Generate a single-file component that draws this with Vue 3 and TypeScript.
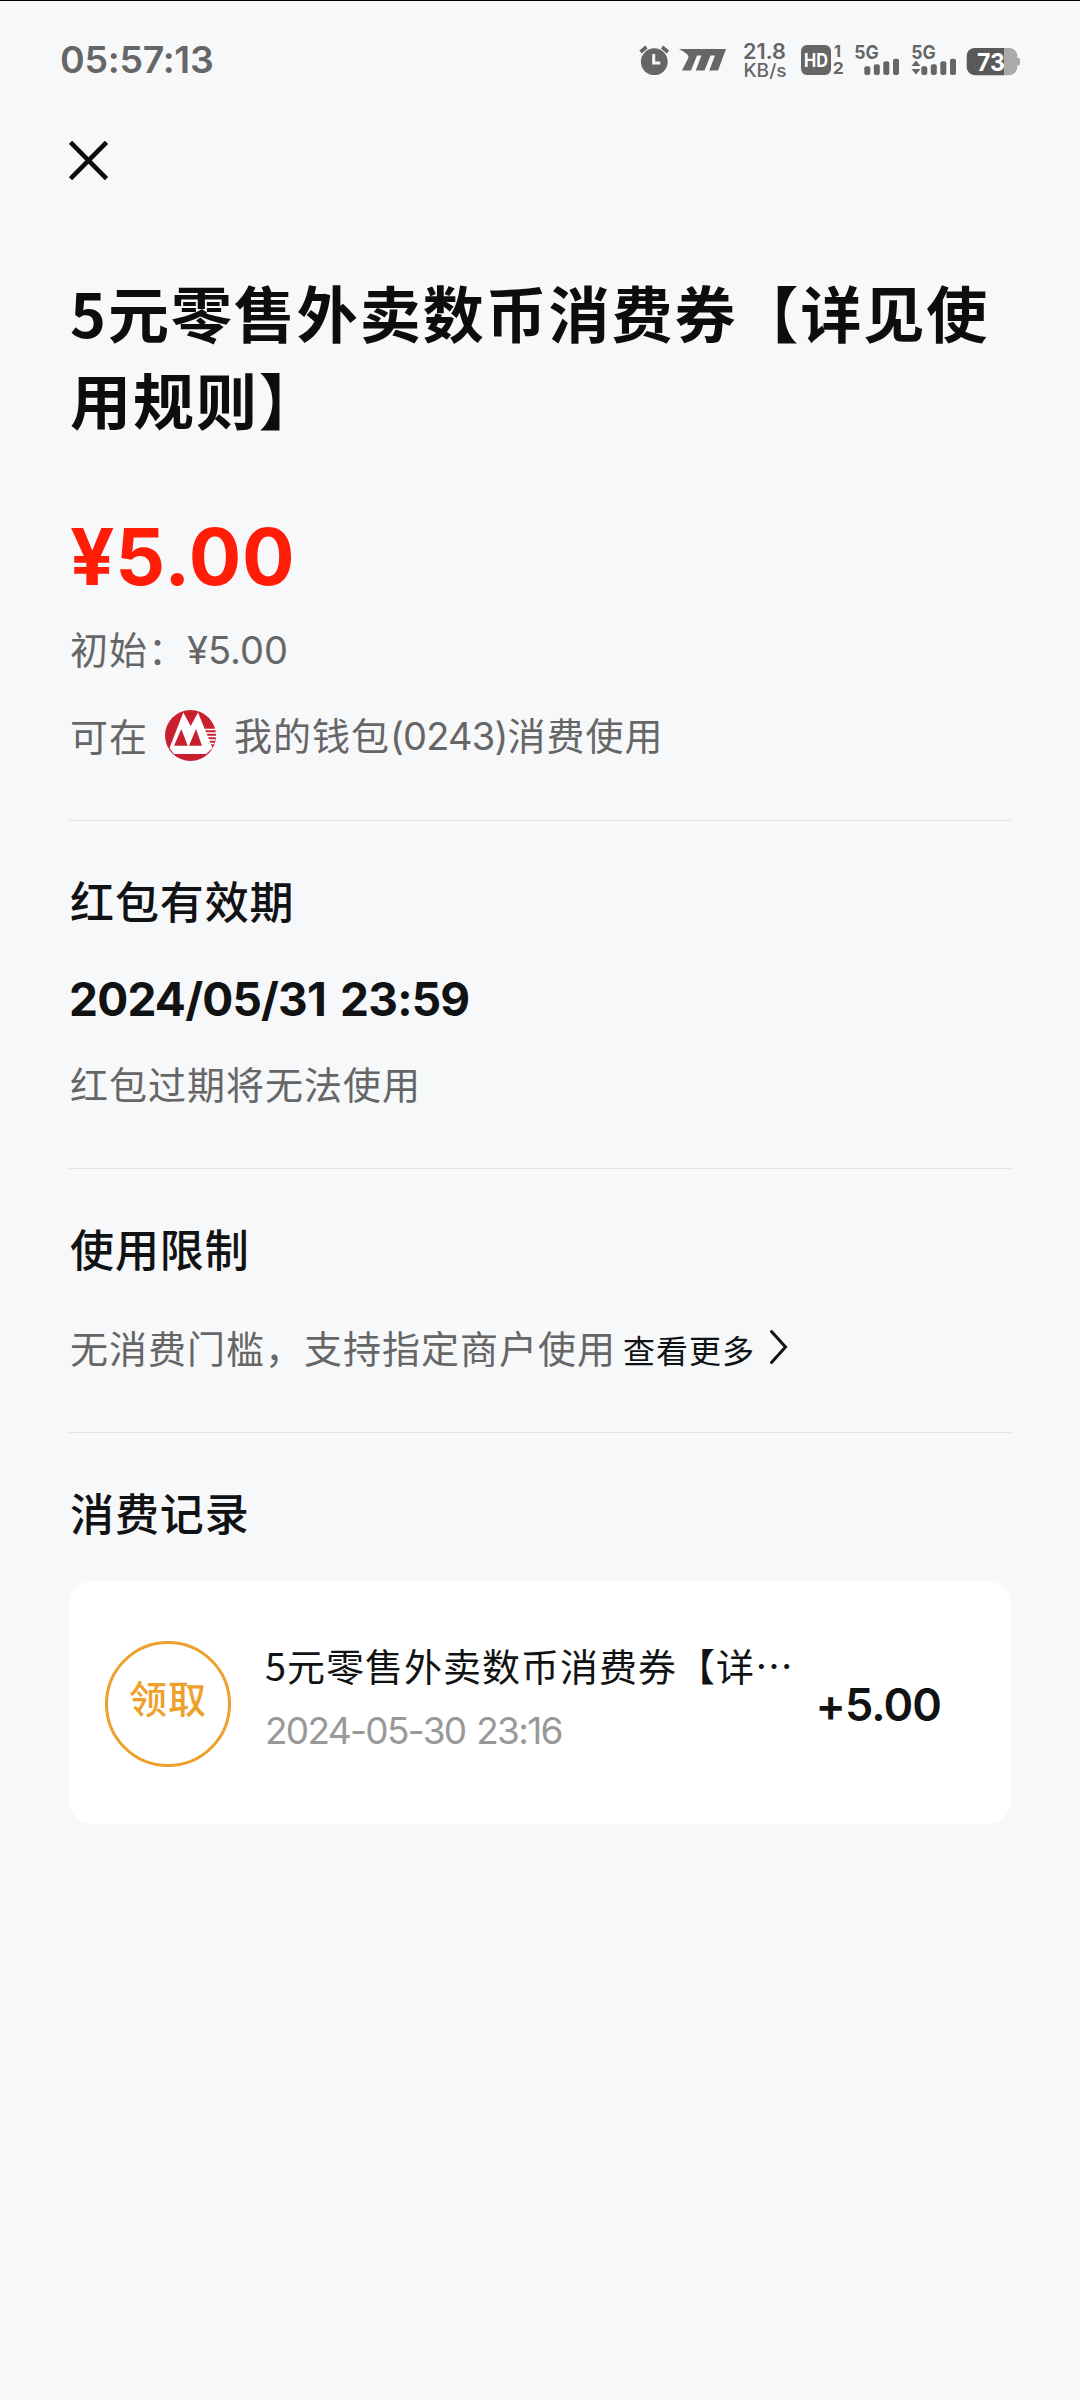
<script setup lang="ts">
interface SpendRecord {
  tag: string
  title: string
  time: string
  amount: string
}

const records: SpendRecord[] = [
  { tag: '领取', title: '5元零售外卖数币消费券【详…', time: '2024-05-30 23:16', amount: '+5.00' },
]

const signalBars = [
  { x: 864.3, y: 66.3 },
  { x: 873.8, y: 64.3 },
  { x: 883.3, y: 61.3 },
  { x: 893, y: 58.7 },
]
</script>

<template>
  <div class="screen" lang="zh-CN">
    <header class="status">
      <span class="clock">05:57:13</span>
      <div class="icons">
        <svg class="alarm" viewBox="638 40 32 40" width="32" height="40">
          <circle cx="654.3" cy="61.7" r="13.4" fill="#666" />
          <path d="M640.500 52l6-5M668 52l-6-5" stroke="#666" stroke-width="3.6" fill="none" />
          <path d="M653.700 54v9h6.600" stroke="#f7f8fa" stroke-width="3" fill="none" />
        </svg>
        <svg class="brand" viewBox="678 40 50 40" width="50" height="40">
          <path d="M679 49H726L718 70.500H709.300L715 55.500H710.500L704.500 70.500H695.700L701.500 55.500H697L691 70.500H682L688.500 57.500Q689 54 679 49Z" fill="#666" />
        </svg>
        <svg class="speed" viewBox="740 34 48 48" width="48" height="48">
          <text x="743" y="58.5" font-size="21.5" font-weight="600" textLength="43" lengthAdjust="spacingAndGlyphs">21.8</text>
          <text x="743.5" y="76.5" font-size="18" font-weight="500" textLength="43" lengthAdjust="spacingAndGlyphs">KB/s</text>
        </svg>
        <svg class="hd" viewBox="800 40 44 40" width="44" height="40">
          <rect x="801" y="45" width="30" height="30" rx="6" fill="#666" />
          <text class="light" x="804" y="67" font-size="18.5" font-weight="700" textLength="24" lengthAdjust="spacingAndGlyphs">HD</text>
          <text x="834" y="57" font-size="16" font-weight="700" textLength="7" lengthAdjust="spacingAndGlyphs">1</text>
          <text x="832.7" y="74" font-size="16" font-weight="700" textLength="11" lengthAdjust="spacingAndGlyphs">2</text>
        </svg>
        <svg class="sig1" viewBox="854 40 46 40" width="46" height="40">
          <text x="854.3" y="58.7" font-size="18.5" font-weight="700" textLength="24.5" lengthAdjust="spacingAndGlyphs">5G</text>
          <rect v-for="b in signalBars" :key="b.x" :x="b.x" :y="b.y" width="6" :height="75 - b.y" rx="2" fill="#666" />
        </svg>
        <svg class="sig2" viewBox="911 40 46 40" width="46" height="40">
          <text x="911.3" y="58.7" font-size="18.5" font-weight="700" textLength="24.5" lengthAdjust="spacingAndGlyphs">5G</text>
          <path d="M916 60.500l4.500 5.500h-9zM916 74.500l4.500-5.500h-9z" fill="#666" />
          <rect v-for="b in signalBars" :key="b.x" :x="b.x + 57" :y="b.y" width="6" :height="75 - b.y" rx="2" fill="#666" />
        </svg>
        <svg class="battery" viewBox="966 40 54 40" width="54" height="40">
          <path d="M1004 48h5.300a8 8 0 0 1 8 8v2h1.200q1.600 0 1.600 1.600v4q0 1.600-1.600 1.600h-1.200v2a8 8 0 0 1-8 8H1004z" fill="#aaa" />
          <path d="M1004 48h-29.300a8 8 0 0 0-8 8v11.200a8 8 0 0 0 8 8H1004z" fill="#595959" />
          <text class="light" x="977" y="70.5" font-size="24.5" font-weight="700" textLength="28" lengthAdjust="spacingAndGlyphs">73</text>
        </svg>
      </div>
    </header>

    <main class="page">
      <button class="close" aria-label="关闭">
        <svg viewBox="0 0 40 40" width="40" height="40">
          <path d="M1.500 1.300L37.500 37.700M37.500 1.300L1.500 37.700" stroke="#0c0d0e" stroke-width="4.6" />
        </svg>
      </button>

      <h1 class="title">5元零售外卖数币消费券【详见使<br />用规则】</h1>
      <div class="amount">¥5.00</div>
      <div class="line initial">初始：<span class="num">¥5.00</span></div>
      <div class="line wallet">
        <span>可在</span>
        <svg class="bank" viewBox="0 0 51 51" width="51" height="51">
          <circle cx="25.5" cy="25.5" r="25.5" fill="#c8202f" />
          <path d="M4.500 38L18.300 2.500L25.700 16L33 2.500L47.500 38L41 44H9Z" fill="#fff" />
          <path d="M9 35.700L16.300 19L22.700 35.700ZM24 35.700L31 19L37 35.700Z" fill="#c8202f" />
          <path d="M40 19.500H50.500M41 23H51M42 26.500H51M43.500 30H50M45 33.500H49" stroke="#fff" stroke-width="1.3" />
        </svg>
        <span>我的钱包<span class="digits">(0243)</span>消费使用</span>
      </div>

      <section class="block validity">
        <h2>红包有效期</h2>
        <div class="date">2024/05/31 23:59</div>
        <p class="line">红包过期将无法使用</p>
      </section>

      <section class="block limit">
        <h2>使用限制</h2>
        <p class="line rule">
          <span>无消费门槛，支持指定商户使用</span>
          <a class="more">查看更多</a>
          <svg class="chevron" viewBox="0 0 20 36" width="20" height="36">
            <path d="M2.500 2.500L16.500 18L2.500 33.500" fill="none" stroke="#111" stroke-width="3" stroke-linecap="round" />
          </svg>
        </p>
      </section>

      <section class="block history">
        <h2>消费记录</h2>
        <article v-for="r in records" :key="r.time" class="card">
          <div class="badge"><span>{{ r.tag }}</span></div>
          <div class="info">
            <div class="name">{{ r.title }}</div>
            <div class="time">{{ r.time }}</div>
          </div>
          <div class="delta">{{ r.amount }}</div>
        </article>
      </section>
    </main>
  </div>
</template>

<style>
body {
  margin: 0;
  background: #f7f8fa;
}
</style>

<style scoped>
.screen {
  box-sizing: border-box;
  width: 1080px;
  height: 2400px;
  overflow: hidden;
  border-top: 1px solid #000;
  background: #f7f8fa;
  color: #111213;
  font-family: "Noto Sans CJK SC", "Noto Sans", sans-serif;
  white-space: nowrap;
}

h1, h2, p {
  margin: 0;
}

svg {
  display: block;
  flex: none;
}

.status {
  display: flex;
  justify-content: space-between;
  box-sizing: border-box;
  height: 119px;
  padding: 37px 60px 0 60px;
}

.clock {
  height: 40px;
  margin-top: 2px;
  font: 600 37.5px/40px Inter, sans-serif;
  letter-spacing: -0.3px;
  color: #666;
}

.icons {
  display: flex;
  align-items: center;
  height: 44px;
}

.icons text {
  font-family: Inter, sans-serif;
  fill: #666;
}

.icons text.light {
  fill: #fff;
}

.brand { margin-left: 8px; }
.speed { margin: -4px 0 0 12px; }
.hd { margin-left: 12px; }
.sig1 { margin-left: 10px; }
.sig2 { margin-left: 11px; }
.battery { margin-left: 9px; }

.page {
  padding: 21px 69px 0 69px;
}

.close {
  display: block;
  padding: 0;
  border: 0;
  background: none;
}

.title {
  margin-top: 87px;
  padding-left: 1px;
  font-size: 61px;
  font-weight: 700;
  line-height: 87px;
  letter-spacing: 1.95px;
  color: #0c0d0e;
}

.amount {
  height: 90px;
  margin-top: 70px;
  padding-left: 1px;
  font-family: Inter, sans-serif;
  font-size: 78px;
  font-weight: 700;
  line-height: 90px;
  letter-spacing: 0.8px;
  color: #ff1d08;
}

.line {
  height: 56px;
  padding-left: 1px;
  font-size: 38px;
  line-height: 56px;
  letter-spacing: 1px;
  color: #666;
}

.initial {
  margin-top: 18px;
}

.num,
.digits {
  font-family: Inter, sans-serif;
  letter-spacing: 0;
}

.digits {
  letter-spacing: -0.8px;
}

.wallet {
  display: flex;
  align-items: center;
  margin-top: 31px;
}

.bank {
  margin: 0 18px 0 17px;
}

.block {
  border-top: 1px solid #e2e4e7;
}

.validity {
  margin-top: 57px;
}

h2 {
  height: 60px;
  padding-left: 1px;
  font-size: 44px;
  font-weight: 500;
  line-height: 60px;
  letter-spacing: 0.9px;
}

.validity h2 {
  margin-top: 49px;
}

.date {
  height: 60px;
  margin-top: 39px;
  font: 700 46px/60px Inter, sans-serif;
  letter-spacing: -0.8px;
  word-spacing: 4px;
}

.validity .line {
  margin-top: 26px;
}

.limit {
  margin-top: 57px;
}

.limit h2 {
  margin-top: 49px;
}

.rule {
  display: flex;
  margin-top: 41px;
}

.more {
  margin-left: 7px;
  padding-top: 2px;
  font-size: 32px;
  color: #111213;
}

.chevron {
  margin: 10px 0 0 14px;
}

.history {
  margin-top: 57px;
}

.history h2 {
  margin-top: 49px;
}

.card {
  display: flex;
  box-sizing: border-box;
  height: 243px;
  margin-top: 39px;
  padding: 60px 70px 0 36px;
  border-radius: 24px;
  background: #fff;
}

.badge {
  box-sizing: border-box;
  flex: none;
  width: 126px;
  height: 126px;
  padding-top: 24px;
  border: 3px solid #eea02b;
  border-radius: 50%;
  font-size: 38px;
  font-weight: 500;
  line-height: 58px;
  letter-spacing: 1px;
  text-align: center;
  color: #eea02b;
}

.info {
  flex: 1;
  min-width: 0;
  margin-left: 34px;
}

.name {
  height: 50px;
  margin-top: -1px;
  font-size: 38px;
  line-height: 50px;
  letter-spacing: 1px;
}

.time {
  height: 50px;
  margin-top: 16px;
  font: 400 37px/50px Inter, sans-serif;
  letter-spacing: -1.7px;
  word-spacing: 2px;
  color: #999;
}

.delta {
  padding-top: 34px;
  font-family: Inter, sans-serif;
  font-size: 45px;
  font-weight: 600;
  line-height: 60px;
  letter-spacing: -0.9px;
}
</style>
